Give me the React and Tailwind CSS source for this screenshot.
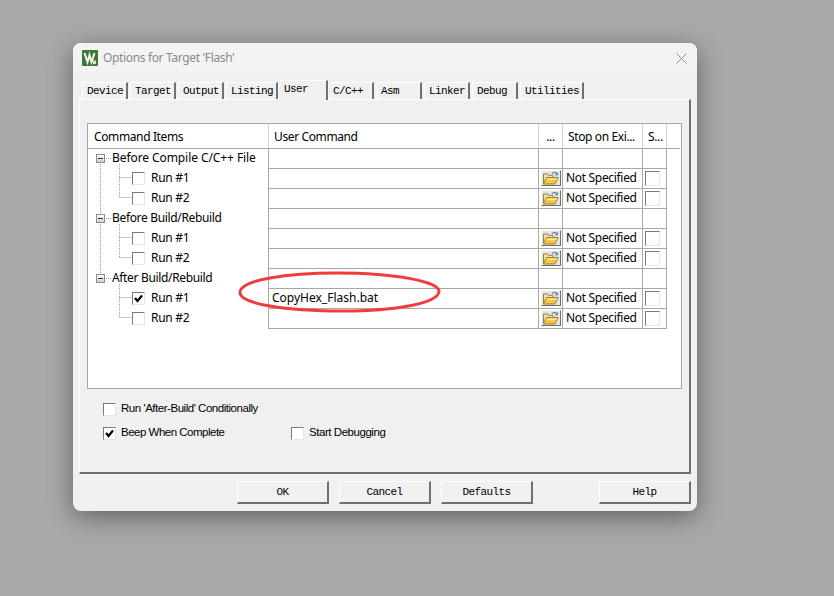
const mono = "font-['Liberation_Mono',monospace]";

function Tab({ label, w, active }) {
  if (active) {
    return (
      <div style={{ width: w }} className={`h-[20px] -mb-px z-10 bg-[#f0f0f0] border-t border-l border-white border-r-2 border-r-[#707070] pl-[5px] pt-[1px] text-[11px] tracking-[-0.6px] leading-[14px] text-black ${mono}`}>
        {label}
      </div>
    );
  }
  return (
    <div style={{ width: w }} className={`h-[17px] bg-[#f0f0f0] border-t border-l border-white border-r-2 border-r-[#707070] pl-[4px] pt-[1px] text-[11px] tracking-[-0.6px] leading-[14px] text-black ${mono}`}>
      {label}
    </div>
  );
}

function Check({ checked, big }) {
  return (
    <div className={`${big ? "w-[15px] h-[15px]" : "w-[13px] h-[13px]"} shrink-0 bg-white border border-[#e6e6e6] border-t-[#7a7a7a] border-l-[#7a7a7a] flex items-center justify-center`}>
      {checked && (
        <svg width="9" height="9" viewBox="0 0 9 9">
          <path d="M1 4 L3.5 7 L8 1.5" fill="none" stroke="#000" strokeWidth="2.2" />
        </svg>
      )}
    </div>
  );
}

function Folder() {
  return (
    <div className="w-[20px] h-[16px] mb-[1px] bg-[#e4e4e4] border border-[#f8f8f8] border-r-[#6e6e6e] border-b-[#6e6e6e] flex items-center justify-center">
      <svg width="17" height="14" viewBox="0 0 17 14">
        <path d="M1.5 13 V3 H6 L7 4.5 H11 V7" fill="#efe0a8" stroke="#9a8440" strokeWidth="1" />
        <path d="M1.5 13 L4.5 6.5 H16 L13 13 Z" fill="#f6c744" stroke="#a5822a" strokeWidth="1" />
        <path d="M5 7.5 H15 L14.5 9 H4.5 Z" fill="#fbe9a0" />
        <path d="M10 3 C11 1.2 13 1 14.5 2.2" fill="none" stroke="#5f84b4" strokeWidth="1.2" />
        <path d="M15.8 1 V4.2 H12.8 Z" fill="#4f76a8" />
      </svg>
    </div>
  );
}

function Expander() {
  return (
    <div className="w-[9px] h-[9px] shrink-0 border border-[#8c8c8c] bg-gradient-to-b from-[#ffffff] to-[#d0d0d0] flex items-center justify-center">
      <div className="w-[5px] h-px bg-[#24365e]" />
    </div>
  );
}

const cell = "h-[20px] border-b border-r border-[#a8a8a8] shrink-0 bg-white";

function Row({ group, label, checked, command, tight }) {
  return (
    <div className="flex h-[20px]">
      <div className="w-[181px] shrink-0 h-[20px] pb-[1px] border-r border-[#a8a8a8] flex items-center">
        {group ? (
          <div className="flex items-center pl-[8px]">
            <Expander />
            <span className={`ml-[7px] pb-[2px] text-black ${tight ? "tracking-[-0.08px]" : "tracking-[-0.34px]"}`}>{label}</span>
          </div>
        ) : (
          <div className="flex items-center pl-[44px]">
            <Check checked={checked} />
            <span className="ml-[6px] pb-[2px] text-black tracking-[-0.3px]">{label}</span>
          </div>
        )}
      </div>
      <div className={`${cell} w-[270px] pl-[3px] leading-[18px] text-black`}>{command}</div>
      <div className={`${cell} w-[24px] flex items-center justify-center`}>{!group && <Folder />}</div>
      <div className={`${cell} w-[80px] pl-[3px] leading-[18px] tracking-[-0.32px] text-black`}>{!group && "Not Specified"}</div>
      <div className={`${cell} w-[24px] flex items-center pl-[2px] pb-[1px]`}>{!group && <Check big />}</div>
    </div>
  );
}

function Btn({ children, className = "" }) {
  return (
    <div className={`w-[92px] h-[23px] bg-[#f0f0f0] border border-white border-r-2 border-b-2 border-r-[#707070] border-b-[#707070] flex items-center justify-center text-[11px] tracking-[-0.6px] text-black ${mono} ${className}`}>
      {children}
    </div>
  );
}

const rows = [
  { group: true, label: "Before Compile C/C++ File", tight: true },
  { label: "Run #1" },
  { label: "Run #2" },
  { group: true, label: "Before Build/Rebuild" },
  { label: "Run #1" },
  { label: "Run #2" },
  { group: true, label: "After Build/Rebuild" },
  { label: "Run #1", checked: true, command: "CopyHex_Flash.bat" },
  { label: "Run #2" },
];

const headSep = "h-full border-r border-[#d4d4d4] pl-[5px] pt-[2px] shrink-0 flex items-center text-black tracking-[-0.38px]";
const optionText = "font-['Liberation_Sans',sans-serif] text-[11.5px]";

export default function App() {
  return (
    <div className={`w-[834px] h-[596px] overflow-hidden bg-[#a9a9a9] pl-[73px] pt-[43px] font-['Noto_Sans',sans-serif] text-[12px]`}>
      <div className="relative w-[624px] h-[468px] rounded-[8px] bg-[#f0f0f0] shadow-[0_6px_26px_rgba(0,0,0,0.42)] overflow-hidden">
        {/* title bar */}
        <div className="h-[29px] bg-[#f3f3f3] flex items-center pl-[9px] pr-[10px] pt-[1px]">
          <svg width="16" height="16" viewBox="0 0 16 16" className="shrink-0">
            <rect width="16" height="16" rx="1" fill="#3a7a36" />
            <path d="M2.5 3 L5.5 12 L7.5 5 L9.5 12 L12.5 3" fill="none" stroke="#f2f6ea" strokeWidth="2" />
            <path d="M11 10.5 H14 V14 H11 Z" fill="#d8e6c8" />
          </svg>
          <span className="ml-[5px] text-[#8a8a8a] text-[12px] tracking-[-0.35px]">Options for Target 'Flash'</span>
          <svg width="11" height="11" viewBox="0 0 11 11" className="ml-auto">
            <path d="M0.5 0.5 L10.5 10.5 M10.5 0.5 L0.5 10.5" stroke="#8f8f8f" strokeWidth="1" />
          </svg>
        </div>

        {/* tabs */}
        <div className="h-[19px] pl-[9px] mt-[8px] flex items-end gap-[2px] relative z-10">
          <Tab label="Device" w={46} />
          <Tab label="Target" w={46} />
          <Tab label="Output" w={46} />
          <Tab label="Listing" w={52} />
          <div className="-ml-[2px]"><Tab label="User" w={50} active /></div>
          <div className="-ml-[2px]"><Tab label="C/C++" w={46} /></div>
          <Tab label="Asm" w={46} />
          <Tab label="Linker" w={46} />
          <Tab label="Debug" w={46} />
          <Tab label="Utilities" w={64} />
        </div>

        {/* panel */}
        <div className="ml-[6px] w-[612px] h-[375px] border-t border-l border-white border-r-2 border-b-2 border-r-[#6e6e6e] border-b-[#6e6e6e] pt-[23px] pl-[7px]">
          <div className="w-[595px] h-[266px] bg-white border border-[#a8a8a8]">
            {/* header */}
            <div className="flex h-[25px] w-[592px] border-b border-[#a8a8a8]">
              <div className={`${headSep} w-[181px] pl-[6px]`}>Command Items</div>
              <div className={`${headSep} w-[270px]`}>User Command</div>
              <div className={`${headSep} w-[24px] justify-center !pl-0`}>...</div>
              <div className={`${headSep} w-[80px]`}>Stop on Exi...</div>
              <div className={`${headSep} w-[24px] pl-[5px]`}>S...</div>
            </div>
            {/* body */}
            <div className="relative">
              <svg className="absolute left-0 top-0 pointer-events-none" width="50" height="180" viewBox="0 0 50 180">
                <g stroke="#9a9a9a" strokeWidth="1" strokeDasharray="1 1" fill="none">
                  <path d="M12.5 13 V130" />
                  <path d="M16 9.5 H24" />
                  <path d="M16 69.5 H24" />
                  <path d="M16 129.5 H24" />
                  <path d="M31.5 15 V49 M31.5 28.5 H44 M31.5 48.5 H44" />
                  <path d="M31.5 75 V109 M31.5 88.5 H44 M31.5 108.5 H44" />
                  <path d="M31.5 135 V169 M31.5 148.5 H44 M31.5 168.5 H44" />
                </g>
              </svg>
              <div className="relative">
                {rows.map((r, i) => (
                  <Row key={i} {...r} />
                ))}
              </div>
            </div>
          </div>

          {/* options */}
          <div className="pl-[16px] pt-[14px] text-black">
            <div className="flex items-center h-[12px]">
              <Check />
              <span className={`ml-[5px] ${optionText} tracking-[-0.47px]`}>Run 'After-Build' Conditionally</span>
            </div>
            <div className="flex items-center h-[12px] mt-[12px]">
              <Check checked />
              <span className={`ml-[5px] w-[170px] ${optionText} tracking-[-0.5px]`}>Beep When Complete</span>
              <Check />
              <span className={`ml-[5px] ${optionText} tracking-[-0.45px]`}>Start Debugging</span>
            </div>
          </div>
        </div>

        {/* buttons */}
        <div className="flex mt-[7px] pl-[164px]">
          <Btn>OK</Btn>
          <Btn className="ml-[10px]">Cancel</Btn>
          <Btn className="ml-[10px]">Defaults</Btn>
          <Btn className="ml-[66px]">Help</Btn>
        </div>

        {/* annotation */}
        <svg className="absolute left-[164px] top-[227px] pointer-events-none" width="206" height="46" viewBox="0 0 206 46">
          <path d="M3 22 C4 10 50 3 100 3 C160 3 202 12 202 21 C202 33 160 41 105 41 C50 41 2 34 3 22 Z" fill="none" stroke="#f03c3c" strokeWidth="3" />
        </svg>
      </div>
    </div>
  );
}
